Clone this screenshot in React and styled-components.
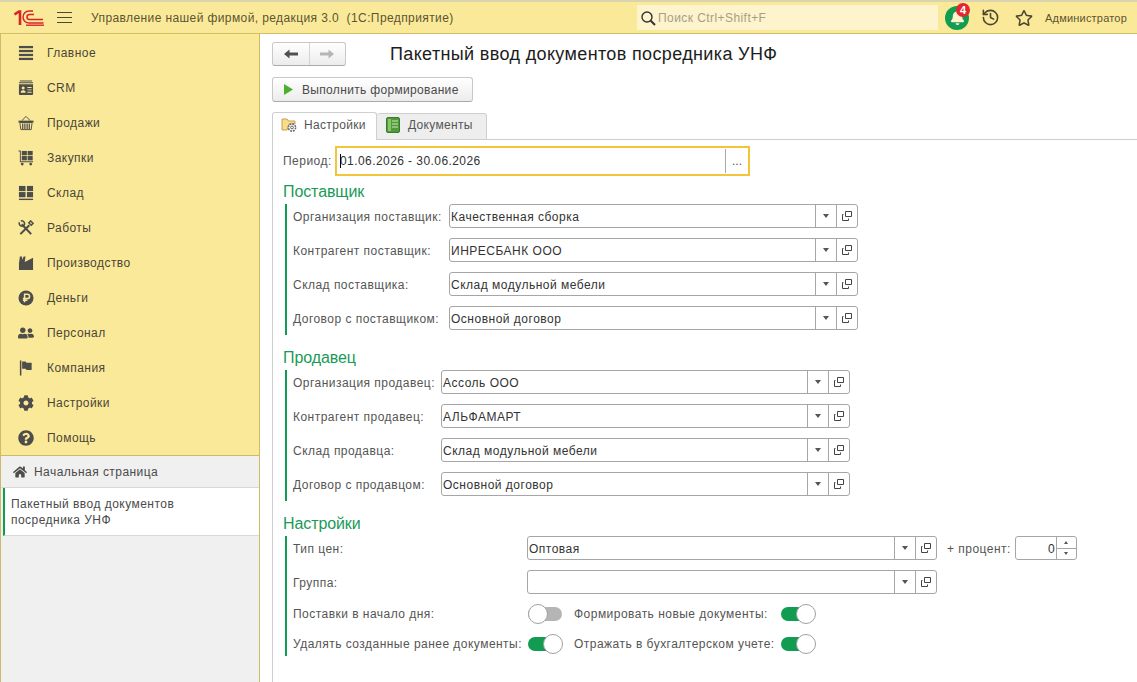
import React from "react";
import styled, { createGlobalStyle } from "styled-components";
import { FaCog, FaHome, FaQuestionCircle, FaUserFriends, FaRegStar, FaBell } from "react-icons/fa";
import { LuHistory } from "react-icons/lu";

const GlobalStyle = createGlobalStyle`
  html, body { margin: 0; padding: 0; height: 100%; background: #fff; }
  body { font-family: "Liberation Sans", Arial, sans-serif; font-size: 12px; color: #555; overflow: hidden; }
  #root { height: 100%; }
  * { box-sizing: border-box; }
`;

const Shell = styled.div`
  display: flex;
  flex-direction: column;
  width: 1137px;
  height: 682px;
  overflow: hidden;
`;

const TopBar = styled.header`
  display: flex;
  align-items: center;
  height: 34px;
  flex: none;
  background: #fbe99a;
  border-top: 2px solid #d9d4ae;
  border-bottom: 1px solid #d2bd62;
  color: #5c5530;
`;

const LogoBox = styled.div`
  width: 57px;
  padding-left: 14px;
  display: flex;
`;

const Burger = styled.div`
  width: 34px;
  display: flex;
  flex-direction: column;
  gap: 4px;
  span { display: block; width: 15px; height: 1px; background: #4d4a30; }
`;

const AppTitle = styled.div`
  width: 546px;
  font-size: 12px;
  letter-spacing: 0.4px;
  white-space: pre;
`;

const Search = styled.div`
  width: 301px;
  height: 25px;
  background: #fdf3cd;
  display: flex;
  align-items: center;
  padding-left: 3px;
  gap: 2px;
  color: #a89f82;
  letter-spacing: 0.43px;
`;

const BellWrap = styled.div`
  position: relative;
  width: 24px;
  height: 24px;
  margin-left: 7px;
  border-radius: 50%;
  background: #119c52;
  color: #fdf3cd;
  display: flex;
  align-items: center;
  justify-content: center;
`;

const Badge = styled.span`
  position: absolute;
  top: -3px;
  right: -1px;
  width: 14px;
  height: 14px;
  border-radius: 50%;
  background: #e3262e;
  color: #fff;
  font-size: 11px;
  font-weight: bold;
  line-height: 14px;
  text-align: center;
`;

const TopIcon = styled.div`
  display: flex;
  margin-left: ${(p) => p.$left}px;
  color: #4b4630;
`;

const UserName = styled.div`
  margin-left: 12px;
  font-size: 11px;
  letter-spacing: 0.2px;
`;

const Body = styled.div`
  flex: 1;
  display: flex;
  min-height: 0;
`;

const Sidebar = styled.aside`
  width: 260px;
  flex: none;
  display: flex;
  flex-direction: column;
  background: #f0f0f0;
  border-right: 1px solid #cdbb6a;
  border-left: 1px solid #cdbb6a;
`;

const NavList = styled.nav`
  background: #fbe99a;
  border-bottom: 1px solid #cdbb6a;
  height: 422px;
  padding-top: 1px;
`;

const NavItem = styled.div`
  height: 35px;
  display: flex;
  align-items: center;
  padding-left: 17px;
  gap: 13px;
  color: #4a4636;
  letter-spacing: 0.45px;
  svg { flex: none; width: 16px; height: 16px; color: #4d4d4a; }
`;

const HomeRow = styled.div`
  height: 32px;
  display: flex;
  align-items: center;
  gap: 7px;
  padding-left: 12px;
  color: #4a4a4a;
  border-bottom: 1px solid #d8d8d8;
  letter-spacing: 0.45px;
`;

const OpenTab = styled.div`
  height: 48px;
  padding: 8px 8px 0 6px;
  background: #fff;
  border-left: 2px solid #119c52;
  margin-left: 2px;
  line-height: 16px;
  border-bottom: 1px solid #d8d8d8;
  letter-spacing: 0.47px;
  color: #4a4a4a;
`;

const Main = styled.main`
  flex: 1;
  padding: 8px 0 0 12px;
  display: flex;
  flex-direction: column;
  min-width: 0;
`;

const HeaderRow = styled.div`
  display: flex;
  align-items: center;
  height: 24px;
`;

const NavGroup = styled.div`
  display: flex;
  width: 74px;
  height: 24px;
  border: 1px solid #c8c8c8;
  border-bottom-color: #aaa;
  border-radius: 3px;
  background: linear-gradient(#fff, #ececec);
`;

const NavHalf = styled.div`
  flex: 1;
  display: flex;
  align-items: center;
  justify-content: center;
  color: ${(p) => (p.$off ? "#b5b5b5" : "#505050")};
  & + & { border-left: 1px solid #d4d4d4; }
`;

const PageTitle = styled.h1`
  margin: 0 0 0 44px;
  font-size: 18px;
  font-weight: normal;
  color: #1c1c1c;
  letter-spacing: 0.36px;
`;

const RunButton = styled.button`
  margin-top: 11px;
  width: 201px;
  height: 25px;
  display: flex;
  align-items: center;
  gap: 9px;
  padding: 0 0 0 11px;
  border: 1px solid #c8c8c8;
  border-bottom-color: #aaa;
  border-radius: 3px;
  background: linear-gradient(#fff, #ececec);
  font: inherit;
  letter-spacing: 0.33px;
  color: #4a4a4a;
`;

const Tabs = styled.div`
  display: flex;
  align-items: flex-end;
  margin-top: 10px;
  height: 28px;
`;

const Tab = styled.div`
  display: flex;
  align-items: center;
  width: ${(p) => p.$w}px;
  height: ${(p) => (p.$active ? 28 : 27)}px;
  gap: ${(p) => (p.$active ? 6 : 8)}px;
  padding: 0 0 3px ${(p) => (p.$active ? 8 : 9)}px;
  background: ${(p) => (p.$active ? "#fff" : "#eeeeee")};
  border: 1px solid #cfcfcf;
  border-bottom: ${(p) => (p.$active ? "none" : "1px solid #cfcfcf")};
  border-left-width: ${(p) => (p.$active ? 1 : 0)}px;
  border-radius: 3px 3px 0 0;
  letter-spacing: 0.33px;
  position: relative;
  z-index: 1;
`;

const Panel = styled.section`
  flex: 1;
  border-left: 1px solid #cfcfcf;
  border-top: 1px solid #cfcfcf;
  margin-top: -1px;
  padding: 6px 0 0 10px;
`;

const PeriodRow = styled.div`
  display: flex;
  align-items: center;
  height: 30px;
`;

const Label = styled.div`
  letter-spacing: 0.47px;
  white-space: nowrap;
  width: ${(p) => (p.$w ? `${p.$w}px` : "auto")};
  flex: none;
  margin-left: ${(p) => p.$left || 0}px;
`;

const PeriodField = styled.div`
  width: 415px;
  height: 30px;
  border: 2px solid #f2c63a;
  display: flex;
  align-items: center;
  background: #fff;
`;

const PeriodValue = styled.div`
  position: relative;
  flex: 1;
  padding-left: 3px;
  color: #333;
  letter-spacing: 0.43px;
`;

const Cursor = styled.span`
  position: absolute;
  left: 3px;
  top: 0;
  width: 1px;
  height: 14px;
  background: #000;
`;

const PeriodPick = styled.div`
  width: 23px;
  height: 24px;
  border-left: 1px solid #aaa;
  text-align: center;
  line-height: 24px;
  color: #555;
`;

const GroupTitle = styled.h2`
  margin: ${(p) => p.$top}px 0 2px;
  font-size: 16px;
  line-height: 20px;
  font-weight: normal;
  color: #1a9a58;
  letter-spacing: -0.1px;
`;

const GroupBody = styled.div`
  margin-left: 2px;
  border-left: 2px solid #119c52;
  padding: 0 0 ${(p) => p.$bottom ?? 5}px 6px;
  display: flex;
  flex-direction: column;
  gap: 10px;
`;

const FormRow = styled.div`
  display: flex;
  align-items: center;
  height: ${(p) => p.$h || 24}px;
  ${Label} { padding-top: ${(p) => (p.$h ? 0 : 2)}px; }
`;

const Field = styled.div`
  width: ${(p) => p.$w || 409}px;
  height: 24px;
  flex: none;
  display: flex;
  align-items: center;
  border: 1px solid #a6a6a6;
  border-radius: 3px;
  background: #fff;
`;

const FieldText = styled.div`
  flex: 1;
  padding: 2px 0 0 1px;
  color: #333;
  letter-spacing: 0.5px;
`;

const FieldBtn = styled.div`
  width: 21px;
  height: 100%;
  border-left: 1px solid #a6a6a6;
  display: flex;
  align-items: center;
  justify-content: center;
  color: #444;
`;

const Caret = styled.span`
  width: 0;
  height: 0;
  border-left: 3px solid transparent;
  border-right: 3px solid transparent;
  border-top: 4px solid #555;
`;

const Spin = styled.div`
  width: 62px;
  height: 24px;
  flex: none;
  margin-left: 4px;
  display: flex;
  border: 1px solid #a6a6a6;
  border-radius: 3px;
`;

const SpinValue = styled.div`
  flex: 1;
  text-align: right;
  line-height: 24px;
  padding-right: 1px;
  color: #333;
`;

const SpinArrows = styled.div`
  width: 20px;
  border-left: 1px solid #a6a6a6;
  display: flex;
  flex-direction: column;
  div {
    flex: 1;
    display: flex;
    align-items: center;
    justify-content: center;
    font-size: 0;
  }
  div + div { border-top: 1px solid #a6a6a6; }
`;

const SpinUp = styled.span`
  width: 0;
  height: 0;
  border-left: 2px solid transparent;
  border-right: 2px solid transparent;
  border-bottom: 3px solid #555;
`;

const SpinDown = styled(SpinUp)`
  border-bottom: none;
  border-top: 3px solid #555;
`;

const ToggleTrack = styled.div`
  position: relative;
  width: 34px;
  height: 14px;
  flex: none;
  border-radius: 7px;
  background: ${(p) => (p.$on ? "#119c52" : "#b5b5b5")};
`;

const ToggleKnob = styled.span`
  position: absolute;
  top: -3px;
  left: ${(p) => (p.$on ? 15 : 0)}px;
  width: 20px;
  height: 20px;
  border-radius: 50%;
  background: #fff;
  border: 1px solid #a0a0a0;
`;

const Toggle = ({ on }) => (
  <ToggleTrack $on={on}>
    <ToggleKnob $on={on} />
  </ToggleTrack>
);

const Logo = () => (
  <svg width="30" height="16" viewBox="0 0 30 16" fill="none" stroke="#d8232a">
    <path d="M0.5 4.5 L5 1.5 H6 V15" strokeWidth="2.6" />
    <path d="M19 1 H15 a5.5 5.5 0 0 0 0 12 H29.5" strokeWidth="1.5" />
    <path d="M29 9.5 H15.5 a2.2 2.2 0 0 1 0 -5 H20" strokeWidth="1.5" />
    <path d="M12 15.2 H30" strokeWidth="1.4" />
  </svg>
);

const MagnifierIcon = () => (
  <svg width="16" height="16" viewBox="0 0 16 16" fill="none" stroke="#333" strokeWidth="1.4">
    <circle cx="7" cy="7" r="5" />
    <path d="M10.5 10.5 L15 15" strokeWidth="2" />
  </svg>
);

const ArrowIcon = ({ flip }) => (
  <svg width="14" height="10" viewBox="0 0 14 10" fill="currentColor" style={flip ? { transform: "scaleX(-1)" } : undefined}>
    <path d="M0 5 L5.5 0.5 V3.5 H14 V6.5 H5.5 V9.5 Z" />
  </svg>
);

const LinkIcon = () => (
  <svg width="10" height="10" viewBox="0 0 10 10" fill="none" stroke="#444" strokeWidth="1">
    <path d="M3.5 0.5 H9.5 V5.5 H3.5 Z" />
    <path d="M1.5 3.5 H0.5 V9.5 H6.5 V7.5" />
  </svg>
);

const SettingsTabIcon = () => (
  <svg width="17" height="16" viewBox="0 0 17 16" fill="none">
    <path d="M1 13 V2 H6 L7.5 4 H14 V7 H8 L6 13 Z" fill="#f6dc8c" stroke="#c8a24a" />
    <circle cx="11" cy="10.5" r="3.6" fill="#fff" stroke="#666" strokeWidth="1.6" strokeDasharray="1.8 1" />
    <circle cx="11" cy="10.5" r="1.4" fill="#fff" stroke="#666" />
  </svg>
);

const DocsTabIcon = () => (
  <svg width="14" height="16" viewBox="0 0 14 16">
    <rect x="0.5" y="0.5" width="13" height="15" rx="1.5" fill="#4f9a3a" stroke="#3a7a2a" />
    <rect x="2" y="2" width="3" height="12" fill="#8cc46c" />
    <path d="M6 4 H12 M6 7 H12 M6 10 H12" stroke="#cfe8b8" strokeWidth="1" />
  </svg>
);

const ListIcon = () => (
  <svg viewBox="0 0 17 17" fill="currentColor">
    <rect x="1" y="1" width="15" height="2.4" />
    <rect x="1" y="5.2" width="15" height="2.4" />
    <rect x="1" y="9.4" width="15" height="2.4" />
    <rect x="1" y="13.6" width="15" height="2.4" />
  </svg>
);

const CrmIcon = () => (
  <svg viewBox="0 0 17 17" fill="currentColor">
    <path d="M2 0.5 H15 V1.5 H2 Z M1 2.5 H16 V3.5 H1 Z" />
    <path fillRule="evenodd" d="M1 4.5 H16 V15 a1 1 0 0 1 -1 1 H2 a1 1 0 0 1 -1 -1 Z M5.5 7 a1.6 1.6 0 1 0 0.01 0 Z M3 13.5 H8 V12.5 a2 2 0 0 0 -2 -1.6 H5 a2 2 0 0 0 -2 1.6 Z M10 7.5 H14.5 V8.5 H10 Z M10 10 H14.5 V11 H10 Z M10 12.5 H14.5 V13.5 H10 Z" />
  </svg>
);

const BasketIcon = () => (
  <svg viewBox="0 0 17 17" fill="none" stroke="currentColor">
    <path d="M4 6 L8.5 1.5 L13 6" strokeWidth="1" />
    <rect x="0.5" y="6" width="16" height="2" fill="currentColor" strokeWidth="0" />
    <path d="M2 8 L3 15.5 H14 L15 8 Z" strokeWidth="1" />
    <path d="M5 9 V15 M7.3 9 V15 M9.7 9 V15 M12 9 V15" strokeWidth="1.3" />
  </svg>
);

const CartIcon = () => (
  <svg viewBox="0 0 17 17" fill="currentColor">
    <path d="M0.5 0.5 H3 V12 H16 V13 H2 V1.5 H0.5 Z" />
    <rect x="4" y="1" width="5.4" height="4.6" />
    <rect x="10.2" y="1" width="5.4" height="4.6" />
    <rect x="4" y="6.4" width="5.4" height="4.6" />
    <rect x="10.2" y="6.4" width="5.4" height="4.6" />
    <circle cx="4.5" cy="15" r="1.5" />
    <circle cx="13.5" cy="15" r="1.5" />
  </svg>
);

const StockIcon = () => (
  <svg viewBox="0 0 17 17" fill="currentColor">
    <rect x="1" y="1" width="7" height="5.5" />
    <rect x="9.5" y="1" width="6.5" height="5.5" />
    <rect x="1" y="7.5" width="7" height="5.5" />
    <rect x="9.5" y="7.5" width="6.5" height="5.5" />
    <rect x="1" y="14.5" width="15" height="1.5" />
  </svg>
);

const ToolsIcon = () => (
  <svg viewBox="0 0 17 17" fill="none" stroke="currentColor">
    <path d="M4 4.5 L14 15" strokeWidth="2.2" />
    <path d="M1.5 2.5 a3 3 0 0 0 4.5 3.5 M3 1 a3 3 0 0 1 3 5" strokeWidth="1.6" />
    <path d="M12 5.5 L2.5 15" strokeWidth="2.2" />
    <path d="M11.5 3 L13.5 1 L16 3.5 L14 5.5 Z" strokeWidth="1.6" />
  </svg>
);

const FactoryIcon = () => (
  <svg viewBox="0 0 17 17" fill="currentColor">
    <path d="M1 16 V9 L2 1.5 H4.2 L4.6 5 L6 1.5 H8 L7.2 7.5 L16 3 V16 Z" />
  </svg>
);

const RubleIcon = () => (
  <svg viewBox="0 0 17 17">
    <circle cx="8.5" cy="8.5" r="8" fill="currentColor" />
    <path d="M7 13 V4.5 H10 a2.2 2.2 0 0 1 0 4.6 H5.2 M5.2 11 H10" fill="none" stroke="#fbe99a" strokeWidth="1.6" />
  </svg>
);

const FlagIcon = () => (
  <svg viewBox="0 0 17 17" fill="currentColor">
    <rect x="2" y="0.5" width="1.6" height="16" />
    <path d="M4.4 1.5 H8 L9 2.8 H14.5 V10.5 H9 L8 9.2 H4.4 Z" />
  </svg>
);

const navItems = [
  { title: "Главное", Icon: ListIcon },
  { title: "CRM", Icon: CrmIcon },
  { title: "Продажи", Icon: BasketIcon },
  { title: "Закупки", Icon: CartIcon },
  { title: "Склад", Icon: StockIcon },
  { title: "Работы", Icon: ToolsIcon },
  { title: "Производство", Icon: FactoryIcon },
  { title: "Деньги", Icon: RubleIcon },
  { title: "Персонал", Icon: FaUserFriends },
  { title: "Компания", Icon: FlagIcon },
  { title: "Настройки", Icon: FaCog },
  { title: "Помощь", Icon: FaQuestionCircle },
];

const supplierRows = [
  ["Организация поставщик:", "Качественная сборка"],
  ["Контрагент поставщик:", "ИНРЕСБАНК ООО"],
  ["Склад поставщика:", "Склад модульной мебели"],
  ["Договор с поставщиком:", "Основной договор"],
];

const sellerRows = [
  ["Организация продавец:", "Ассоль ООО"],
  ["Контрагент продавец:", "АЛЬФАМАРТ"],
  ["Склад продавца:", "Склад модульной мебели"],
  ["Договор с продавцом:", "Основной договор"],
];

const SelectField = ({ value, width }) => (
  <Field $w={width}>
    <FieldText>{value}</FieldText>
    <FieldBtn><Caret /></FieldBtn>
    <FieldBtn><LinkIcon /></FieldBtn>
  </Field>
);

const FieldGroup = ({ rows, labelWidth }) => (
  <GroupBody>
    {rows.map(([label, value]) => (
      <FormRow key={label}>
        <Label $w={labelWidth}>{label}</Label>
        <SelectField value={value} />
      </FormRow>
    ))}
  </GroupBody>
);

export default function App() {
  return (
    <Shell>
      <GlobalStyle />
      <TopBar>
        <LogoBox><Logo /></LogoBox>
        <Burger><span /><span /><span /></Burger>
        <AppTitle>Управление нашей фирмой, редакция 3.0  (1С:Предприятие)</AppTitle>
        <Search><MagnifierIcon />Поиск Ctrl+Shift+F</Search>
        <BellWrap>
          <FaBell size={15} />
          <Badge>4</Badge>
        </BellWrap>
        <TopIcon $left={12}><LuHistory size={19} /></TopIcon>
        <TopIcon $left={15}><FaRegStar size={18} /></TopIcon>
        <UserName>Администратор</UserName>
      </TopBar>
      <Body>
        <Sidebar>
          <NavList>
            {navItems.map(({ title, Icon }) => (
              <NavItem key={title}><Icon />{title}</NavItem>
            ))}
          </NavList>
          <HomeRow><FaHome size={14} color="#4d4d4a" />Начальная страница</HomeRow>
          <OpenTab>Пакетный ввод документов<br />посредника УНФ</OpenTab>
        </Sidebar>
        <Main>
          <HeaderRow>
            <NavGroup>
              <NavHalf><ArrowIcon /></NavHalf>
              <NavHalf $off><ArrowIcon flip /></NavHalf>
            </NavGroup>
            <PageTitle>Пакетный ввод документов посредника УНФ</PageTitle>
          </HeaderRow>
          <RunButton>
            <svg width="9" height="11" viewBox="0 0 9 11"><path d="M0 0 L9 5.5 L0 11 Z" fill="#4caf2e" /></svg>
            Выполнить формирование
          </RunButton>
          <Tabs>
            <Tab $active $w={105}><SettingsTabIcon />Настройки</Tab>
            <Tab $w={110}><DocsTabIcon />Документы</Tab>
          </Tabs>
          <Panel>
            <PeriodRow>
              <Label $w={52}>Период:</Label>
              <PeriodField>
                <PeriodValue><Cursor />01.06.2026 - 30.06.2026</PeriodValue>
                <PeriodPick>...</PeriodPick>
              </PeriodField>
            </PeriodRow>

            <GroupTitle $top={6}>Поставщик</GroupTitle>
            <FieldGroup rows={supplierRows} labelWidth={156} />

            <GroupTitle $top={13}>Продавец</GroupTitle>
            <FieldGroup rows={sellerRows} labelWidth={148} />

            <GroupTitle $top={13}>Настройки</GroupTitle>
            <GroupBody $bottom={2}>
              <FormRow>
                <Label $w={234}>Тип цен:</Label>
                <SelectField value="Оптовая" width={410} />
                <Label $left={10}>+ процент:</Label>
                <Spin>
                  <SpinValue>0</SpinValue>
                  <SpinArrows>
                    <div><SpinUp /></div>
                    <div><SpinDown /></div>
                  </SpinArrows>
                </Spin>
              </FormRow>
              <FormRow>
                <Label $w={234}>Группа:</Label>
                <SelectField width={410} />
              </FormRow>
              <FormRow $h={20}>
                <Label $w={235}>Поставки в начало дня:</Label>
                <Toggle />
                <Label $left={12} $w={207}>Формировать новые документы:</Label>
                <Toggle on />
              </FormRow>
              <FormRow $h={20}>
                <Label $w={235}>Удалять созданные ранее документы:</Label>
                <Toggle on />
                <Label $left={12} $w={207}>Отражать в бухгалтерском учете:</Label>
                <Toggle on />
              </FormRow>
            </GroupBody>
          </Panel>
        </Main>
      </Body>
    </Shell>
  );
}
